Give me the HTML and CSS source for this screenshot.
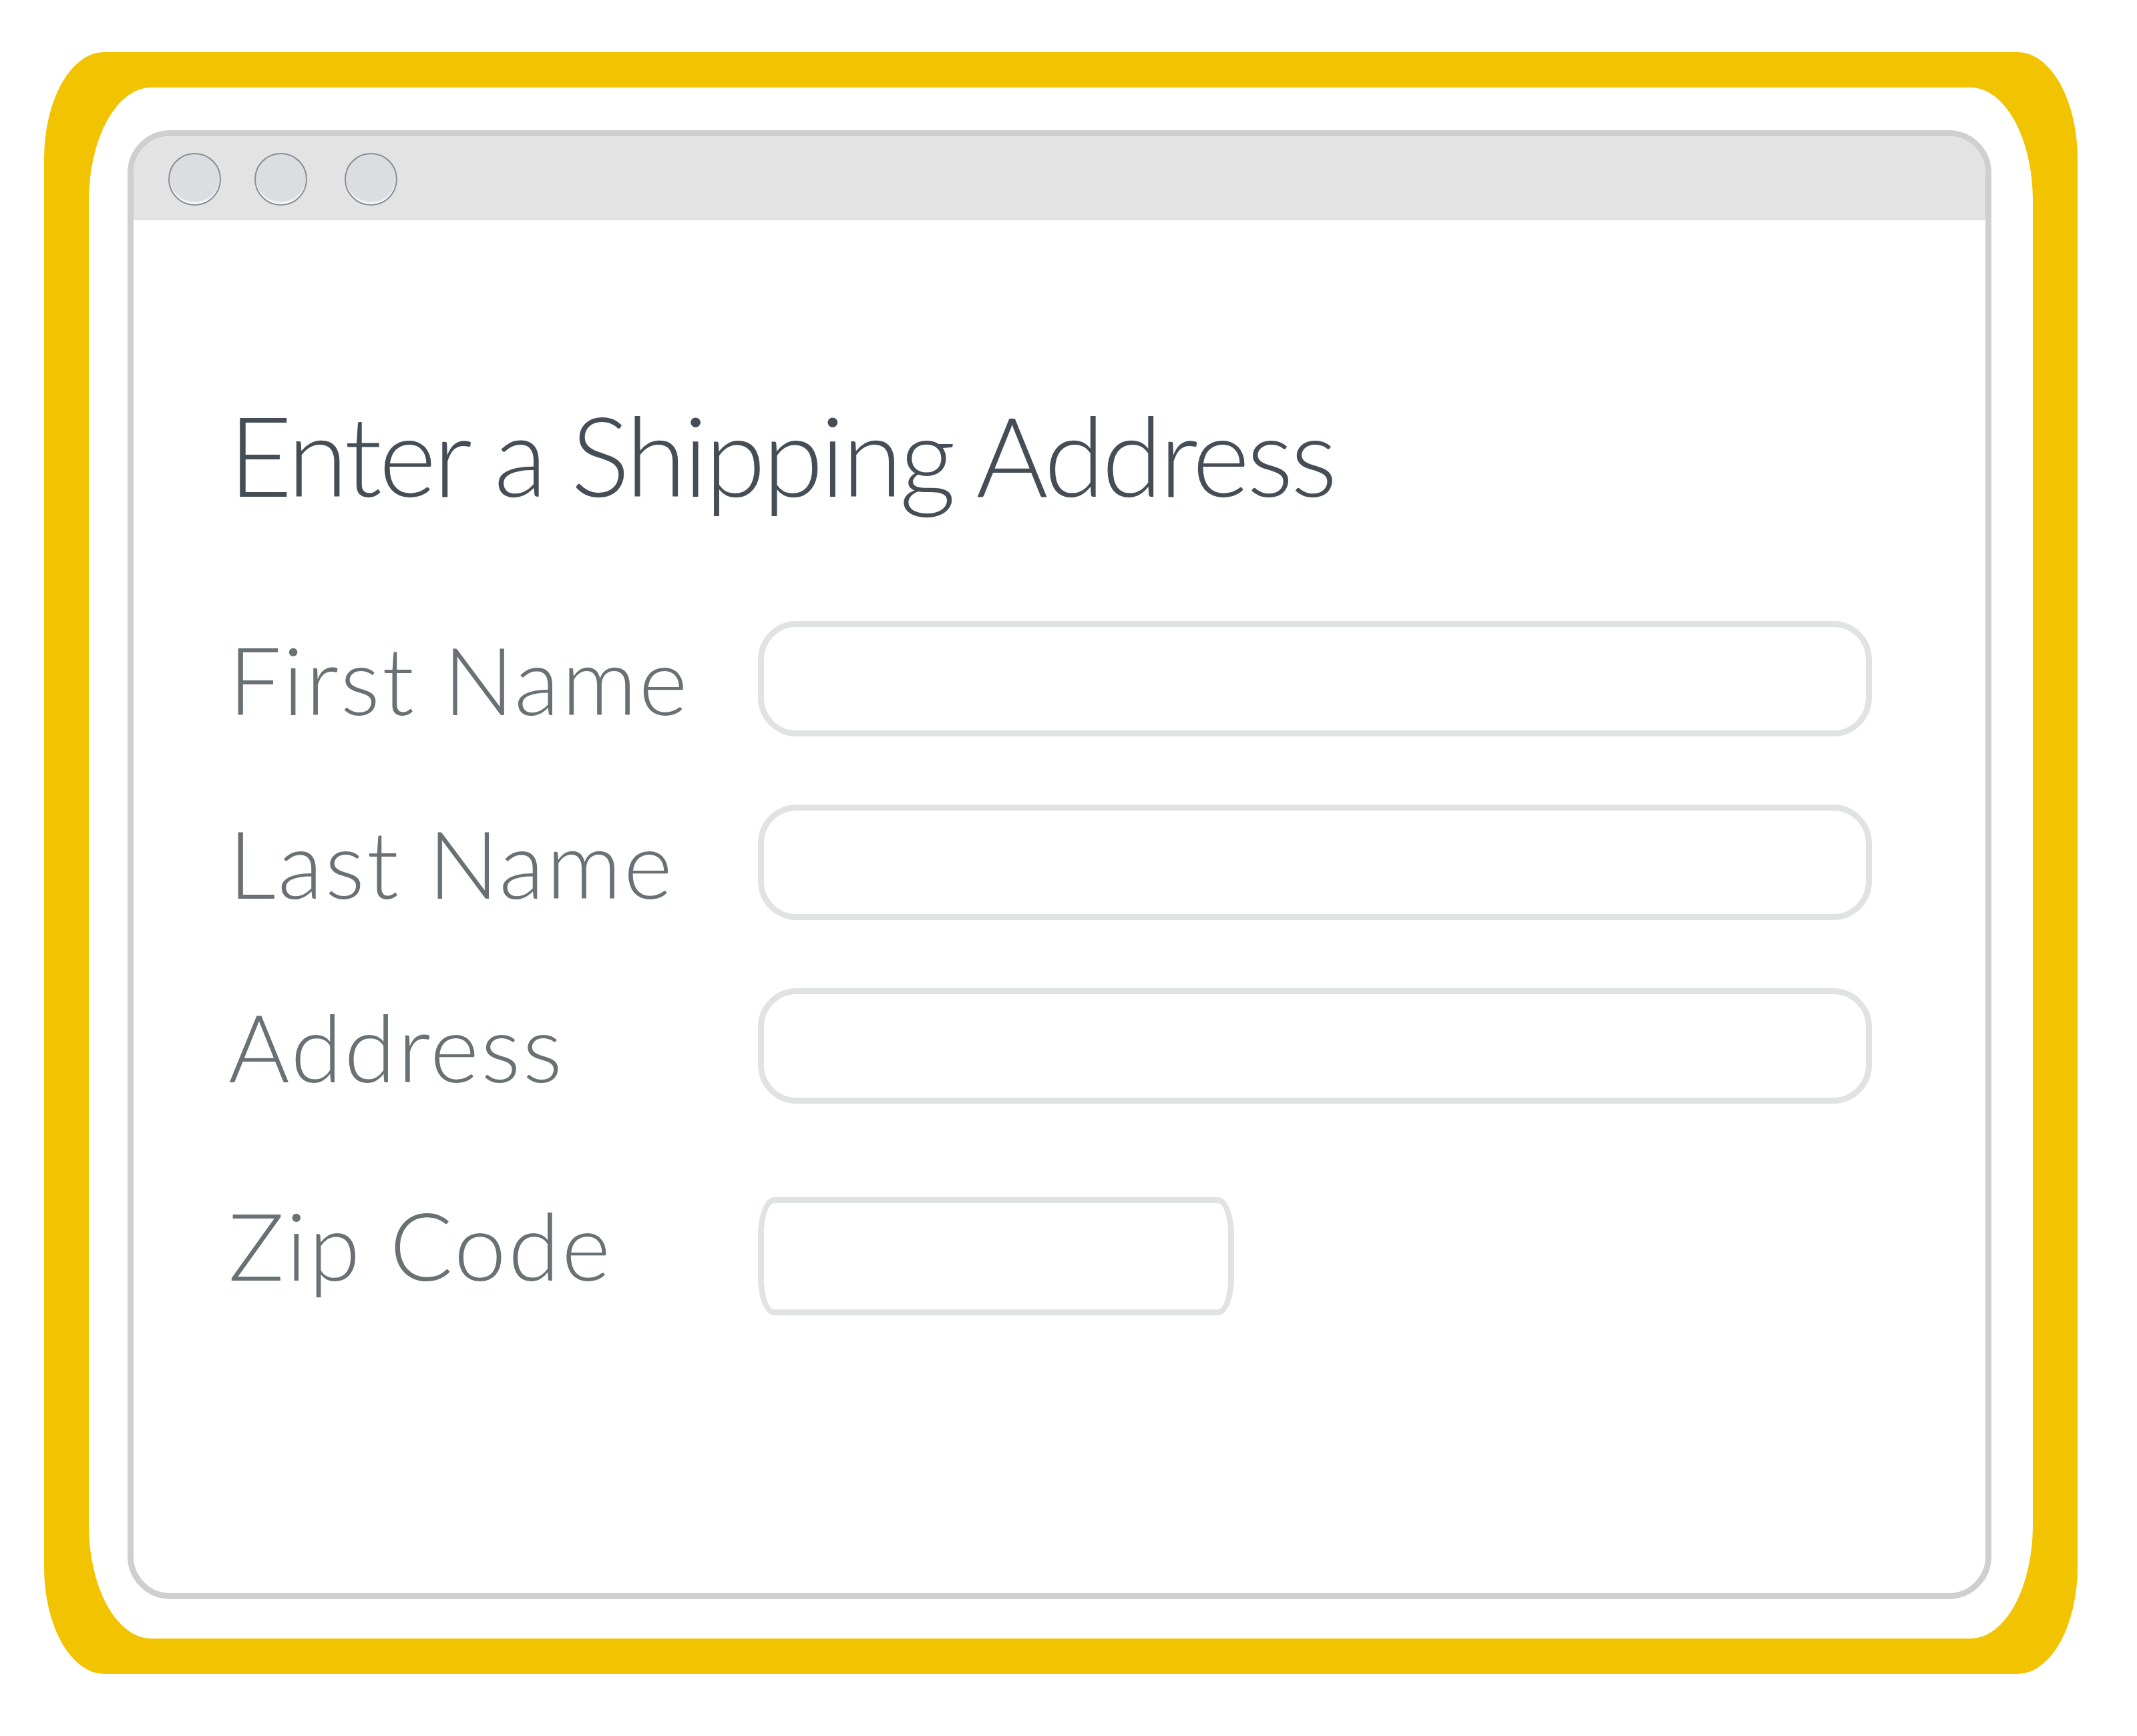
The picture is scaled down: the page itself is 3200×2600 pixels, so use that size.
FILE: index.html
```html
<!DOCTYPE html>
<html lang="en">
<head>
<meta charset="utf-8">
<title>Enter a Shipping Address</title>
<link rel="stylesheet" href="styles.css">
</head>
<body>
<div class="frame">
  <div class="mat">
    <div class="window">
      <div class="titlebar">
        <span class="dot"></span>
        <span class="dot dot-2"></span>
        <span class="dot dot-3"></span>
      </div>
      <div class="content">
        <h1 class="heading">Enter a Shipping Address</h1>
        <form class="form">
          <div class="row">
            <label class="label" for="first">First Name</label>
            <input class="field" id="first" type="text">
          </div>
          <div class="row">
            <label class="label" for="last">Last Name</label>
            <input class="field" id="last" type="text">
          </div>
          <div class="row">
            <label class="label" for="address">Address</label>
            <input class="field" id="address" type="text">
          </div>
          <div class="row row-zip">
            <label class="label label-zip" for="zip">Zip Code</label>
            <input class="field field-zip" id="zip" type="text">
          </div>
        </form>
      </div>
    </div>
  </div>
</div>
</body>
</html>
```
FILE: styles.css
```css
html, body {
  margin: 0;
  padding: 0;
  background: #ffffff;
}

body {
  width: 3200px;
  height: 2600px;
  font-family: "Lato", "Open Sans", sans-serif;
}

.frame {
  box-sizing: border-box;
  width: 3045px;
  height: 2429px;
  margin: 78px 0 0 66px;
  padding: 53px 67px;
  background: #f2c300;
  border-radius: 90px / 160px;
}

.mat {
  box-sizing: border-box;
  height: 100%;
  padding: 64px 62px 59px 58px;
  background: #ffffff;
  border-radius: 93px / 170px;
}

.window {
  box-sizing: border-box;
  height: 100%;
  border: 9px solid #cfcfcf;
  border-radius: 64px;
  overflow: hidden;
  background: #ffffff;
}

.titlebar {
  display: flex;
  align-items: center;
  height: 126px;
  padding-left: 52px;
  background: #e3e3e3;
}

.dot {
  box-sizing: border-box;
  width: 79px;
  height: 79px;
  margin-top: 3px;
  border-radius: 50%;
  background: #dcdde1;
  border: 2px solid #8a8f94;
  box-shadow: inset 0 -4px 2px -1px rgba(255, 255, 255, 0.9);
}

.dot-2 {
  margin-left: 50px;
}

.dot-3 {
  margin-left: 56px;
}

.content {
  padding: 268px 0 0 142px;
}

.heading {
  margin: 0;
  font-size: 165px;
  line-height: 1;
  font-weight: 300;
  color: #454e57;
  letter-spacing: -4.5px;
  white-space: nowrap;
}

.form {
  display: flex;
  flex-direction: column;
  gap: 102px;
  margin-top: 167px;
}

.row {
  display: grid;
  grid-template-columns: 793px 1668px;
  align-items: center;
}

.row-zip {
  margin-top: 38px;
}

.label {
  font-size: 140px;
  line-height: 1;
  font-weight: 300;
  color: #697175;
  letter-spacing: 3px;
  white-space: nowrap;
}

.label-zip {
  margin-bottom: 36px;
}

.field {
  box-sizing: border-box;
  width: 1668px;
  height: 173px;
  margin: 0;
  padding: 0;
  border: 9px solid #e1e2e4;
  border-radius: 58px;
  background: #ffffff;
  outline: none;
  font: inherit;
}

.field-zip {
  width: 713px;
  height: 177px;
  border-radius: 24px / 56px;
}
```
